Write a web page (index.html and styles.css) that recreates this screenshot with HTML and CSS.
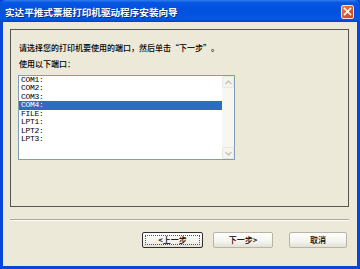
FILE: index.html
```html
<!DOCTYPE html>
<html>
<head>
<meta charset="utf-8">
<link rel="stylesheet" href="styles.css">
</head>
<body>
<div class="window">
  <div class="titlebar">
    <span class="title">实达平推式票据打印机驱动程序安装向导</span>
    <span class="close"><svg width="9" height="9" viewBox="0 0 9 9"><path d="M1.5 1.5 L7.5 7.5 M7.5 1.5 L1.5 7.5" stroke="#fff" stroke-width="1.6" stroke-linecap="square"/></svg></span>
  </div>
  <div class="client">
    <div class="panel">
      <p class="line1">请选择您的打印机要使用的端口，然后单击“下一步”。</p>
      <p class="line2">使用以下端口：</p>
      <div class="listbox">
        <ul class="items">
          <li>COM1:</li>
          <li>COM2:</li>
          <li>COM3:</li>
          <li class="sel">COM4:</li>
          <li>FILE:</li>
          <li>LPT1:</li>
          <li>LPT2:</li>
          <li>LPT3:</li>
        </ul>
        <div class="scroll">
          <span class="sbtn"><svg width="7" height="5" viewBox="0 0 7 5"><path d="M0.5 4 L3.5 1 L6.5 4" fill="none" stroke="#C3C3B8" stroke-width="1.3"/></svg></span>
          <span class="track"></span>
          <span class="sbtn"><svg width="7" height="5" viewBox="0 0 7 5"><path d="M0.5 1 L3.5 4 L6.5 1" fill="none" stroke="#C3C3B8" stroke-width="1.3"/></svg></span>
        </div>
      </div>
    </div>
    <div class="sep"></div>
    <div class="buttons">
      <button class="btn default"><span class="focus">&lt;上一步</span></button>
      <button class="btn next">下一步&gt;</button>
      <button class="btn cancel">取消</button>
    </div>
  </div>
</div>
</body>
</html>
```
FILE: styles.css
```css
html, body {
  margin: 0;
  padding: 0;
  background: #ECE9D8;
}
.window {
  width: 360px;
  height: 269px;
  box-sizing: border-box;
  display: flex;
  flex-direction: column;
  background: #0846D8;
  font-family: "Noto Sans CJK SC", "Liberation Sans", sans-serif;
}
.titlebar {
  height: 22px;
  flex: none;
  display: flex;
  align-items: center;
  justify-content: space-between;
  padding: 0 3px 0 5px;
  background: linear-gradient(#2F7CF0 0%, #0656E2 12%, #0250DE 50%, #0556E6 85%, #0440CC 100%);
  border-radius: 6px 6px 0 0;
}
.title {
  color: #fff;
  font-weight: bold;
  font-size: 9.6px;
  line-height: 12px;
  text-shadow: 1px 1px 0 #0A2C8A;
  padding-top: 1px;
}
.close {
  width: 13px;
  height: 14px;
  box-sizing: border-box;
  border: 1px solid #F4E4DC;
  border-radius: 2px;
  background: linear-gradient(135deg, #EE8050 0%, #E05A2C 50%, #C84A22 100%);
  display: flex;
  align-items: center;
  justify-content: center;
  margin-right: 3px;
  margin-top: 1px;
}
.client {
  flex: 1;
  margin: 0 3px 3px 3px;
  background: #ECE9D8;
  padding: 7px 8px 0 7px;
  display: flex;
  flex-direction: column;
}
.panel {
  height: 178px;
  box-sizing: border-box;
  border: 1px solid #55544E;
  padding: 12px 0 0 8px;
}
.panel p {
  margin: 0;
  font-size: 8px;
  line-height: 12px;
  font-weight: 500;
  color: #000;
}
.line2 {
  margin-top: 4px !important;
}
.listbox {
  margin-top: 5px;
  margin-left: -1px;
  width: 217px;
  height: 85px;
  box-sizing: border-box;
  border: 1px solid #7F9DB9;
  background: #fff;
  display: flex;
}
.items {
  list-style: none;
  margin: 0;
  padding: 0;
  flex: 1;
}
.items li {
  height: 8.43px;
  line-height: 8.43px;
  padding-left: 2px;
  font-family: "Liberation Mono", monospace;
  font-size: 8px;
  letter-spacing: -0.3px;
  color: #000;
}
.items li.sel {
  background: #316AC5;
  color: #fff;
}
.scroll {
  width: 12px;
  flex: none;
  display: flex;
  flex-direction: column;
  background: #F7F6F0;
}
.sbtn {
  height: 12px;
  box-sizing: border-box;
  border: 1px solid #E8E7E0;
  border-radius: 2px;
  background: #F5F4EE;
  display: flex;
  align-items: center;
  justify-content: center;
}
.track {
  flex: 1;
}
.sep {
  margin-top: 12px;
  height: 0;
  border-top: 1px solid #ACA899;
  border-bottom: 1px solid #FFFFFF;
}
.buttons {
  display: flex;
  margin-top: 11px;
  padding-left: 132px;
}
.btn {
  height: 16px;
  width: 61px;
  box-sizing: border-box;
  padding: 0;
  font-family: "Noto Sans CJK SC", "Liberation Sans", sans-serif;
  font-size: 8px;
  font-weight: 500;
  line-height: 10px;
  color: #000;
  background: linear-gradient(#FFFFFF 0%, #F4F3EE 60%, #E3E1D6 100%);
  border: 1px solid #B8B5A6;
  border-radius: 2px;
  display: flex;
  align-items: center;
  justify-content: center;
}
.btn.default {
  border: 1px solid #2F2F2F;
  padding: 2px;
}
.focus {
  flex: 1;
  align-self: stretch;
  display: flex;
  align-items: center;
  justify-content: center;
  border: 1px dotted #555;
}
.btn.next {
  margin-left: 10px;
  width: 60px;
}
.btn.cancel {
  margin-left: 16px;
  width: 58px;
}
```
